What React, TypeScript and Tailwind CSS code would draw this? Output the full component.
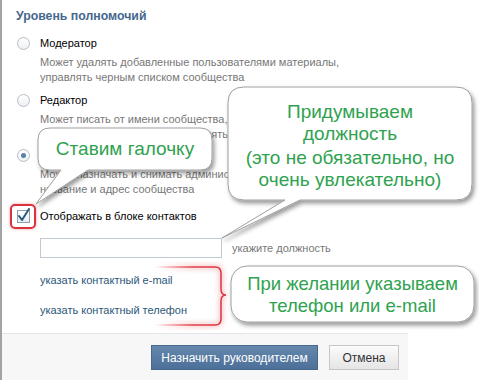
import React from 'react';

function Radio({ checked }: { checked?: boolean }) {
  return (
    <span className="w-[13px] h-[13px] rounded-full border border-[#b7bec6] bg-linear-to-b from-white to-[#edf0f3] flex items-center justify-center shrink-0">
      {checked && <span className="w-[5px] h-[5px] rounded-full bg-[#5b7fa6]" />}
    </span>
  );
}

export default function App() {
  return (
    <div className="relative w-[479px] h-[380px] bg-white overflow-hidden font-['Liberation_Sans',Arial,sans-serif]">
      {/* dialog */}
      <div className="w-[408px] border-l-2 border-[#a3a3a3]">
        <div className="h-[333px] pl-[15px] pt-[8px]">
          <div className="text-[12.3px] leading-[16px] font-bold text-[#45688e] -ml-[1px]">Уровень полномочий</div>

          <div className="mt-[12px]">
            <div className="flex items-center gap-[10px] h-[15px]">
              <Radio />
              <span className="text-[11px] leading-[15px] text-black">Модератор</span>
            </div>
            <div className="ml-[23px] mt-[4px] text-[11px] leading-[15px] text-[#777]">
              <div className="whitespace-nowrap">Может удалять добавленные пользователями материалы,</div>
              <div className="whitespace-nowrap">управлять черным списком сообщества</div>
            </div>
          </div>
          <div className="mt-[8px]">
            <div className="flex items-center gap-[10px] h-[15px]">
              <Radio />
              <span className="text-[11px] leading-[15px] text-black">Редактор</span>
            </div>
            <div className="ml-[23px] mt-[4px] text-[11px] leading-[15px] text-[#777]">
              <div className="whitespace-nowrap">Может писать от имени сообщества,</div>
              <div className="whitespace-nowrap w-[188px] overflow-hidden text-right">обновлять</div>
            </div>
          </div>
          <div className="mt-[6px]">
            <div className="flex items-center gap-[10px] h-[15px]">
              <Radio checked />
            </div>
            <div className="ml-[23px] mt-[4px] text-[11px] leading-[15px] text-[#777]">
              <div className="whitespace-nowrap">Может назначать и снимать админис</div>
              <div className="whitespace-nowrap">название и адрес сообщества</div>
            </div>
          </div>

          {/* checkbox */}
          <div className="mt-[12px] flex items-center gap-[10px] h-[15px]">
            <span className="relative w-[13px] h-[13px] shrink-0">
              <span className="absolute -left-[7px] -top-[6px] w-[26px] h-[25px] rounded-[5px] border-2 border-[#d9343d] shadow-[0_0_3px_rgba(217,52,61,0.5)]" />
              <span className="absolute inset-0 border border-[#8e9fb2] bg-linear-to-b from-white to-[#e9edf2]" />
              <svg className="absolute -left-[1px] -top-[3px]" width="15" height="16" viewBox="0 0 15 16">
                <path d="M3 9 L6 13 L13 2" fill="none" stroke="#2b587a" strokeWidth="2" strokeLinecap="round" strokeLinejoin="round" />
              </svg>
            </span>
            <span className="text-[11px] leading-[15px] text-black">Отображать в блоке контактов</span>
          </div>

          {/* position input */}
          <div className="mt-[14px] ml-[23px] flex items-center gap-[10px]">
            <div className="w-[182px] h-[20px] border border-[#c0cad5] bg-white" />
            <span className="text-[11px] text-[#777]">укажите должность</span>
          </div>

          <div className="mt-[15px] ml-[23px] text-[11px] leading-[15px] text-[#2b587a]">указать контактный e-mail</div>
          <div className="mt-[15px] ml-[23px] text-[11px] leading-[15px] text-[#2b587a]">указать контактный телефон</div>
        </div>

        {/* footer */}
        <div className="h-[47px] border-t border-[#e4e7ea] bg-[#f7f7f7] flex justify-end items-start pt-[11px] pr-[9px] gap-[11px]">
          <button className="w-[167px] h-[25px] border border-[#45688e] bg-linear-to-b from-[#6487ad] to-[#4c7099] text-white text-[12px]">
            Назначить руководителем
          </button>
          <button className="w-[70px] h-[25px] border border-[#c6c6c6] bg-linear-to-b from-[#fbfbfb] to-[#e5e5e5] text-[#333] text-[12px]">
            Отмена
          </button>
        </div>
      </div>

      {/* annotation shapes */}
      <svg className="absolute inset-0 pointer-events-none" width="479" height="380" viewBox="0 0 479 380">
        <defs>
          <filter id="sh" x="-20%" y="-20%" width="140%" height="160%">
            <feDropShadow dx="2" dy="3" stdDeviation="2" floodColor="#000" floodOpacity="0.4" />
          </filter>
          <linearGradient id="br" x1="155" y1="0" x2="222" y2="0" gradientUnits="userSpaceOnUse">
            <stop offset="0" stopColor="#e0303b" stopOpacity="0" />
            <stop offset="0.55" stopColor="#e0303b" stopOpacity="0.9" />
            <stop offset="1" stopColor="#e0303b" stopOpacity="1" />
          </linearGradient>
          <filter id="bl">
            <feGaussianBlur stdDeviation="2.5" />
          </filter>
        </defs>

        {/* callout 1 */}
        <path
          filter="url(#sh)"
          d="M50 128 H200 Q212 128 212 140 V158 Q212 170 200 170 H88 L36 204 L61 170 H50 Q38 170 38 158 V140 Q38 128 50 128 Z"
          fill="#fff"
          stroke="#a0a0a0"
          strokeWidth="1"
        />
        {/* callout 2 */}
        <path
          filter="url(#sh)"
          d="M244 87 H456 Q472 87 472 103 V184 Q472 200 456 200 H300 L222 238 L285 200 H244 Q228 200 228 184 V103 Q228 87 244 87 Z"
          fill="#fff"
          stroke="#a0a0a0"
          strokeWidth="1"
        />
        {/* callout 3 */}
        <rect filter="url(#sh)" x="231" y="266" width="243" height="56" rx="16" fill="#fff" stroke="#a0a0a0" strokeWidth="1" />

        {/* bracket */}
        <path
          d="M155 267 H215 Q221 267 221 273 V289 Q221 295 226 295 Q221 295 221 301 V319 Q221 325 215 325 H155"
          fill="none"
          stroke="url(#br)"
          strokeWidth="5"
          opacity="0.25"
          filter="url(#bl)"
        />
        <path
          d="M155 267 H215 Q221 267 221 273 V289 Q221 295 226 295 Q221 295 221 301 V319 Q221 325 215 325 H155"
          fill="none"
          stroke="url(#br)"
          strokeWidth="1.5"
        />
      </svg>

      {/* annotation texts */}
      <div className="absolute left-[38px] top-[138px] w-[174px] leading-[22px] text-center text-[19px] text-[#2fa24f] whitespace-nowrap">
        Ставим галочку
      </div>
      <div className="absolute left-[228px] top-[101px] w-[244px] text-center text-[19px] leading-[22px] text-[#2fa24f]">
        <div>Придумываем</div>
        <div>должность</div>
        <div className="mt-[2px]">(это не обязательно, но</div>
        <div>очень увлекательно)</div>
      </div>
      <div className="absolute left-[231px] top-[273px] w-[243px] text-center text-[18.5px] leading-[22px] text-[#2fa24f]">
        <div>При желании указываем</div>
        <div>телефон или e-mail</div>
      </div>
    </div>
  );
}
